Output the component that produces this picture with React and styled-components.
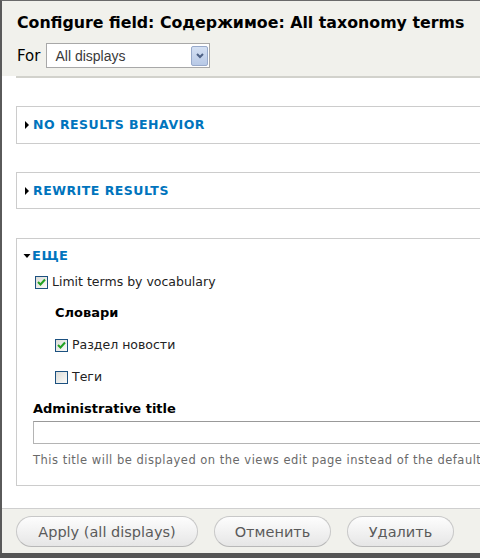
import React from "react";
import styled, { createGlobalStyle } from "styled-components";

const Global = createGlobalStyle`
  html, body {
    margin: 0;
    padding: 0;
    background: #555;
  }
  body {
    width: 480px;
    height: 558px;
    overflow: hidden;
    font-family: "DejaVu Sans", Verdana, sans-serif;
  }
`;

const Dialog = styled.div`
  width: 620px;
  height: 553px;
  box-sizing: border-box;
  border-left: 2px solid #5a5a5a;
  border-top: 1px solid #6a6a6a;
  background: #fff;
  display: flex;
  flex-direction: column;
  overflow: hidden;
`;

const Header = styled.div`
  background: #f1f1ec;
  padding: 12px 0 0 15px;
  height: 63px;
  box-sizing: content-box;
`;

const Title = styled.h1`
  margin: 0;
  font-size: 15.8px;
  line-height: 20px;
  font-weight: bold;
  color: #000;
  white-space: nowrap;
`;

const ForRow = styled.div`
  display: flex;
  align-items: center;
  gap: 6px;
  margin-top: 10px;
  font-size: 15px;
  color: #000;
`;

const Select = styled.div`
  width: 164px;
  height: 25px;
  box-sizing: border-box;
  border: 1px solid #a8a8a8;
  background: #fff;
  display: flex;
  align-items: center;
  justify-content: space-between;
  padding: 0 1px 0 8px;
  font-family: "Liberation Sans", Arial, sans-serif;
  font-size: 14px;
  color: #3a3a3a;
`;

const SelectButton = styled.span`
  width: 17px;
  height: 20px;
  box-sizing: border-box;
  border: 1px solid #98aacb;
  border-radius: 2px;
  background: linear-gradient(#d4e0f3, #b8c9e6);
  display: flex;
  align-items: center;
  justify-content: center;
`;

const HeaderRule = styled.div`
  margin-left: 14px;
  height: 2px;
  background: #d2d2cc;
`;

const Body = styled.div`
  flex: 1;
  padding: 28px 0 0 14px;
  display: flex;
  flex-direction: column;
`;

const Fieldset = styled.div`
  border: 1px solid #cccccc;
  border-right: none;
  margin-top: ${(p) => p.$top || 0}px;
  padding: ${(p) => (p.$open ? "8px 0 0 6px" : "9px 0 0 7px")};
  height: ${(p) => p.$h}px;
  box-sizing: border-box;
`;

const Legend = styled.div`
  display: flex;
  align-items: center;
  gap: ${(p) => (p.$open ? 1 : 3)}px;
  color: #0074bd;
  font-size: ${(p) => (p.$open ? 13 : 12.5)}px;
  font-weight: bold;
  letter-spacing: 0.5px;
  line-height: 17px;
  text-transform: uppercase;
`;

const Arrow = styled.svg`
  width: ${(p) => p.$w}px;
  height: ${(p) => p.$h}px;
  flex: none;
`;

const CheckRow = styled.label`
  display: flex;
  align-items: center;
  gap: 4px;
  margin-left: ${(p) => p.$indent}px;
  margin-top: ${(p) => p.$top}px;
  font-size: 12.5px;
  color: #222;
  line-height: 16px;
`;

const Box = styled.span`
  width: 13px;
  height: 13px;
  box-sizing: border-box;
  border: 1px solid #1c5180;
  background: linear-gradient(135deg, #dcdcd7, #fbfbf9);
  display: flex;
  align-items: center;
  justify-content: center;
  flex: none;
`;

const GroupTitle = styled.div`
  margin: 15px 0 0 32px;
  font-size: 13px;
  font-weight: bold;
  color: #000;
  line-height: 16px;
`;

const FieldLabel = styled.div`
  margin: 16px 0 0 10px;
  font-size: 13px;
  font-weight: bold;
  color: #000;
  line-height: 16px;
`;

const TextInput = styled.div`
  margin: 4px 0 0 10px;
  height: 23px;
  box-sizing: border-box;
  border: 1px solid #b4b4b4;
  border-top-color: #999;
  background: #fff;
`;

const Description = styled.div`
  margin: 8px 0 0 10px;
  font-size: 11.5px;
  letter-spacing: 0.5px;
  color: #6a6a6a;
  line-height: 16px;
  white-space: nowrap;
`;

const Footer = styled.div`
  margin-top: auto;
  border-top: 1px solid #cfcfcf;
  background: #f1f1ec;
  height: 45px;
  box-sizing: border-box;
  display: flex;
  align-items: center;
  gap: 16px;
  padding: 1px 0 0 14px;
`;

const Button = styled.button`
  height: 31px;
  width: ${(p) => p.$w}px;
  border: 1px solid #c8c8c8;
  border-bottom-color: #b8b8b8;
  border-radius: 16px;
  background: linear-gradient(#fdfdfd, #e6e6e6);
  font-family: "DejaVu Sans", Verdana, sans-serif;
  font-size: 14.5px;
  color: #5a5a5a;
  padding: 0;
  cursor: pointer;
`;

const Check = () => (
  <svg width="9" height="8" viewBox="0 0 9 8">
    <path d="M1 4 L3.5 6.5 L8 1.5" stroke="#21a121" strokeWidth="2" fill="none" />
  </svg>
);

const Checkbox = ({ checked }) => <Box>{checked && <Check />}</Box>;

const Closed = () => (
  <Arrow $w={6} $h={8} viewBox="0 0 6 8">
    <path d="M1 0 L5 4 L1 8 Z" fill="#000" />
  </Arrow>
);

const Opened = () => (
  <Arrow $w={8} $h={6} viewBox="0 0 8 6">
    <path d="M0.5 1 L7.5 1 L4 5 Z" fill="#000" />
  </Arrow>
);

export default function App() {
  return (
    <>
      <Global />
      <Dialog>
        <Header>
          <Title>Configure field: Содержимое: All taxonomy terms</Title>
          <ForRow>
            <span>For</span>
            <Select>
              <span>All displays</span>
              <SelectButton>
                <svg width="8" height="6" viewBox="0 0 8 6">
                  <path d="M1 1 L4 4 L7 1" stroke="#4d6185" strokeWidth="2" fill="none" />
                </svg>
              </SelectButton>
            </Select>
          </ForRow>
        </Header>
        <HeaderRule />
        <Body>
          <Fieldset $h={38}>
            <Legend>
              <Closed />
              No results behavior
            </Legend>
          </Fieldset>
          <Fieldset $top={28} $h={37}>
            <Legend>
              <Closed />
              Rewrite results
            </Legend>
          </Fieldset>
          <Fieldset $top={29} $open $h={248}>
            <Legend $open>
              <Opened />
              Еще
            </Legend>
            <CheckRow $indent={12} $top={10}>
              <Checkbox checked />
              Limit terms by vocabulary
            </CheckRow>
            <GroupTitle>Словари</GroupTitle>
            <CheckRow $indent={32} $top={16}>
              <Checkbox checked />
              Раздел новости
            </CheckRow>
            <CheckRow $indent={32} $top={16}>
              <Checkbox />
              Теги
            </CheckRow>
            <FieldLabel>Administrative title</FieldLabel>
            <TextInput />
            <Description>
              This title will be displayed on the views edit page instead of the default
            </Description>
          </Fieldset>
        </Body>
        <Footer>
          <Button $w={182}>Apply (all displays)</Button>
          <Button $w={117}>Отменить</Button>
          <Button $w={107}>Удалить</Button>
        </Footer>
      </Dialog>
    </>
  );
}
